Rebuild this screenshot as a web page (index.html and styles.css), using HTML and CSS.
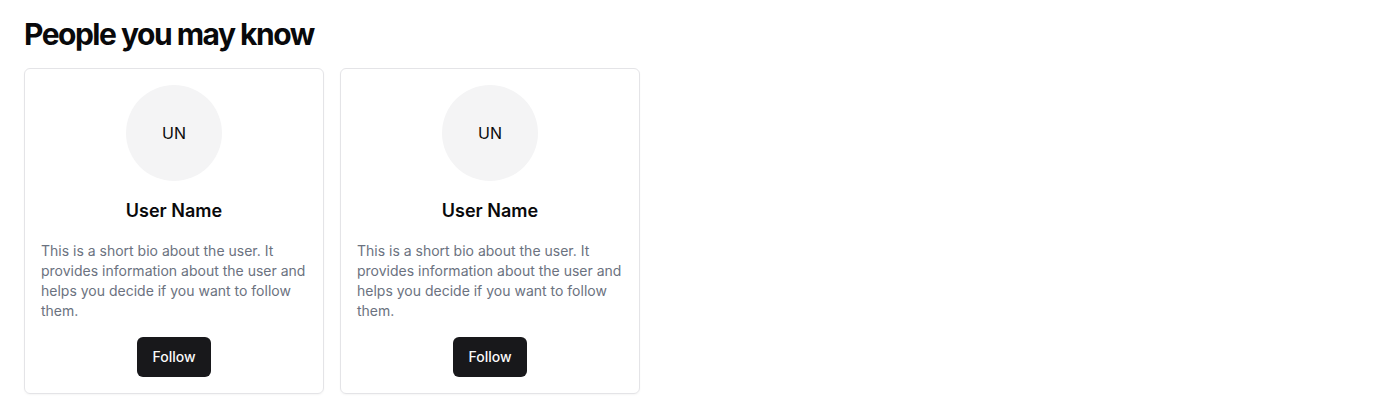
FILE: index.html
```html
<!DOCTYPE html>
<html lang="en">
<head>
<meta charset="utf-8">
<title>People you may know</title>
<link rel="stylesheet" href="styles.css">
</head>
<body>
<main class="page">
  <h1 class="title">People you may know</h1>
  <div class="grid">
    <div class="card">
      <div class="avatar">UN</div>
      <h2 class="name">User Name</h2>
      <p class="bio">This is a short bio about the user. It provides information about the user and helps you decide if you want to follow them.</p>
      <button class="follow">Follow</button>
    </div>
    <div class="card">
      <div class="avatar">UN</div>
      <h2 class="name">User Name</h2>
      <p class="bio">This is a short bio about the user. It provides information about the user and helps you decide if you want to follow them.</p>
      <button class="follow">Follow</button>
    </div>
  </div>
</main>
</body>
</html>
```
FILE: styles.css
```css
* { box-sizing: border-box; }
html, body { margin: 0; padding: 0; background: #fff; }
body { font-family: Inter, "Noto Sans", sans-serif; color: #09090b; }
.page { padding: 16px 24px; }
.title {
  margin: 0 0 16px;
  font-size: 30px;
  line-height: 36px;
  font-weight: 700;
  letter-spacing: -0.05em;
}
.grid { display: flex; gap: 16px; }
.card {
  width: 300px;
  border: 1px solid #e4e4e7;
  border-radius: 6px;
  box-shadow: 0 1px 2px rgba(0,0,0,0.04);
  padding: 16px;
  display: flex;
  flex-direction: column;
  align-items: center;
  gap: 16px;
}
.avatar {
  width: 96px; height: 96px;
  border-radius: 50%;
  background: #f4f4f5;
  display: flex; align-items: center; justify-content: center;
  font-size: 16px;
  color: #09090b;
}
.name { margin: 0; font-size: 18px; line-height: 28px; font-weight: 600; }
.bio { margin: 0; font-size: 14px; line-height: 20px; color: #6b7280; align-self: stretch; }
.follow {
  font-family: inherit;
  height: 40px;
  padding: 0 15px 1px;
  border: 0;
  border-radius: 6px;
  background: #18181b;
  color: #fafafa;
  font-size: 14px;
  font-weight: 500;
}
```
